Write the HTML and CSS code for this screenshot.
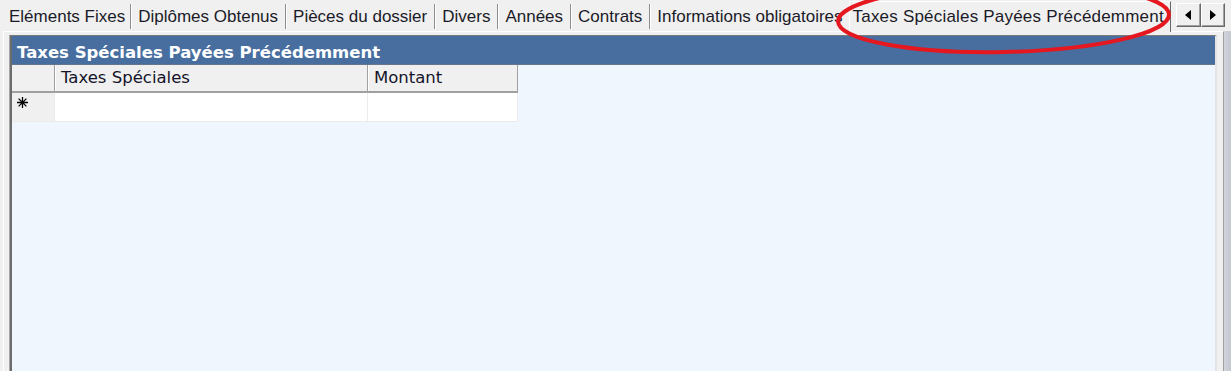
FILE: index.html
```html
<!DOCTYPE html>
<html lang="fr">
<head>
    <meta charset="UTF-8">
    <meta name="viewport" content="width=device-width, initial-scale=1.0">
    <title>Taxes Spéciales Payées Précédemment</title>
    <link rel="stylesheet" href="styles.css">
</head>
<body>
<div class="window">
    <div class="tabbar">
        <div class="tab">Eléments Fixes</div>
        <div class="tab">Diplômes Obtenus</div>
        <div class="tab">Pièces du dossier</div>
        <div class="tab">Divers</div>
        <div class="tab">Années</div>
        <div class="tab">Contrats</div>
        <div class="tab">Informations obligatoires</div>
        <div class="tab tab-active">Taxes Spéciales Payées Précédemment</div>
        <div class="tab-scroll">
            <button class="scroll-btn"><span class="arrow-left"></span></button>
            <button class="scroll-btn"><span class="arrow-right"></span></button>
        </div>
    </div>

    <div class="page-row">
        <div class="tabpage">
            <div class="grid-panel">
                <div class="panel-title">Taxes Spéciales Payées Précédemment</div>

                <div class="grid-head">
                    <div class="head-cell"></div>
                    <div class="head-cell">Taxes Spéciales</div>
                    <div class="head-cell">Montant</div>
                </div>
                <div class="grid-row">
                    <div class="cell row-header">
                        <svg class="new-row" width="11" height="11" viewBox="0 0 11 11">
                            <path d="M5.5 0V11M0 5.5H11M1.6 1.6L9.4 9.4M9.4 1.6L1.6 9.4" stroke="#000" stroke-width="1.3" fill="none"/>
                        </svg>
                    </div>
                    <div class="cell"></div>
                    <div class="cell"></div>
                </div>
            </div>
        </div>
        <div class="edge"></div>
    </div>

    <!-- cercle rouge autour de l'onglet -->
    <svg class="highlight" width="1231" height="60" viewBox="0 0 1231 60">
        <ellipse cx="1003.5" cy="18" rx="165.5" ry="34" transform="rotate(-1.2 1003.5 18)" fill="none" stroke="#e5171f" stroke-width="4"/>
    </svg>
</div>
</body>
</html>
```

FILE: styles.css
```css
body {
    margin: 0;
    height: 100vh;
    overflow: hidden;
    background: #f0f0f0;
    font-family: "Liberation Sans", Arial, sans-serif;
}

.window {
    position: relative;
    display: flex;
    flex-direction: column;
    height: 100%;
}

/* barre d'onglets */
.tabbar {
    display: flex;
    align-items: flex-start;
    height: 31px;
    padding-left: 4px;
    flex-shrink: 0;
}

.tab {
    margin-top: 4px;
    height: 25px;
    line-height: 25px;
    padding: 0 7px;
    font-size: 17px;
    color: #1b1b28;
    border-right: 1px solid #8c8c8c;
    box-shadow: 1px 0 0 #fff;
    white-space: nowrap;
}

.tab:first-child {
    padding: 0 5px;
}

.tab-active {
    position: relative;
    z-index: 1;
    margin-top: 1px;
    margin-left: -2px;
    height: 30px;
    line-height: 30px;
    padding: 0 6px 0 3px;
    background: #f0f0f0;
    border-top: 1px solid #fff;
    border-left: 1px solid #fff;
    border-right: 1px solid #696969;
    box-shadow: none;
    letter-spacing: 0.2px;
}

.tab-scroll {
    display: flex;
    margin-left: 5px;
    margin-top: 3px;
}

.scroll-btn {
    width: 25px;
    height: 24px;
    padding: 0;
    margin: 0;
    background: #f0f0f0;
    border: 1px solid;
    border-color: #fff #696969 #696969 #fff;
    box-shadow: inset -1px -1px 0 #a0a0a0;
    display: flex;
    align-items: center;
    justify-content: center;
}

.scroll-btn + .scroll-btn {
    width: 24px;
}

.arrow-left {
    width: 0;
    height: 0;
    border-top: 5.5px solid transparent;
    border-bottom: 5.5px solid transparent;
    border-right: 6px solid #000;
}

.arrow-right {
    width: 0;
    height: 0;
    border-top: 5.5px solid transparent;
    border-bottom: 5.5px solid transparent;
    border-left: 6px solid #000;
}

/* page de l'onglet */
.page-row {
    flex: 1;
    display: flex;
    min-height: 0;
}

.tabpage {
    margin-left: 3px;
    width: 1221px;
    box-sizing: border-box;
    border-top: 1px solid #fff;
    border-left: 1px solid #fff;
    border-right: 1px solid #a0a0a0;
    padding: 3px 6px 0;
    display: flex;
    flex-direction: column;
}

.edge {
    flex: 1;
    background: linear-gradient(to right, #d2d5dc, #c3c7cf);
}

.grid-panel {
    flex: 1;
    border-left: 2px solid #6b6b6b;
    border-top: 1px solid #7a7a7a;
    border-right: 2px solid #e4e4e8;
    box-shadow: -1px 0 0 #a8a8a8;
    background: #eff6fd;
}

.panel-title {
    height: 29px;
    box-sizing: border-box;
    padding: 6px 5px 0;
    line-height: 22px;
    background: #476e9f;
    border-bottom: 1px solid #66768c;
    color: #fff;
    font-family: "DejaVu Sans", Verdana, sans-serif;
    font-weight: bold;
    font-size: 16.5px;
    white-space: nowrap;
}

/* grille */
.grid-head,
.grid-row {
    display: grid;
    grid-template-columns: 43px 313px 150px;
}

.head-cell {
    height: 28px;
    box-sizing: border-box;
    background: #f0f0f0;
    border-bottom: 2px solid #a0a0a0;
    border-right: 1px solid #a0a0a0;
    padding-left: 6px;
    line-height: 26px;
    font-family: "DejaVu Sans", Verdana, sans-serif;
    font-size: 16.5px;
    color: #14142a;
    white-space: nowrap;
}

.head-cell + .head-cell {
    box-shadow: inset 1px 0 0 #fff;
}

.cell {
    height: 29px;
    box-sizing: border-box;
    background: #fff;
    border-bottom: 1px solid #ebebeb;
    border-right: 1px solid #ececec;
}

.row-header {
    background: #f0f0f0;
    padding: 4px 0 0 5px;
}

.new-row {
    display: block;
}

.highlight {
    position: absolute;
    top: 0;
    left: 0;
    z-index: 5;
    pointer-events: none;
}
```
